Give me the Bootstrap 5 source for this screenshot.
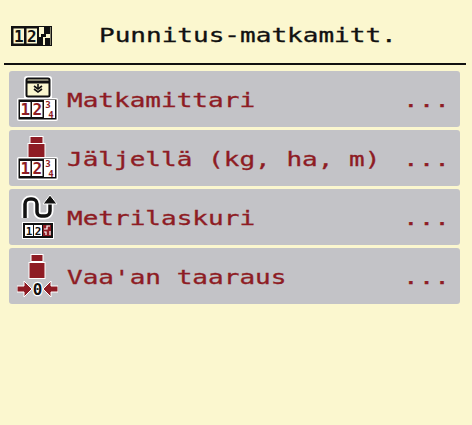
<!DOCTYPE html>
<html lang="en">
  <head>
    <meta charset="UTF-8" />
    <meta name="viewport" content="width=device-width, initial-scale=1.0" />
    <title>Punnitus-matkamitt.</title>
    <link
      href="https://cdn.jsdelivr.net/npm/bootstrap@5.3.0/dist/css/bootstrap.min.css"
      rel="stylesheet"
    />
    <style>
      body {
        background: #fbf7cf;
        font-family: "DejaVu Sans Mono", monospace;
      }
      .screen-head {
        height: 65px;
        margin: 0 6px 0 4px;
        padding: 26px 0 0 7px;
        border-bottom: 2px solid #111;
      }
      .wide-text {
        display: inline-block;
        font-size: 19px;
        line-height: 24px;
        transform: scaleX(1.37);
        transform-origin: left center;
        white-space: nowrap;
        -webkit-text-stroke: 0.3px currentColor;
      }
      .screen-title {
        margin: -3px 0 0 47px;
        font-size: 19px;
        line-height: 24px;
        color: #111;
      }
      .menu-stack {
        margin: 6px 12px 0 9px;
        gap: 3px;
      }
      .menu-row {
        height: 56px;
        padding: 0 10px 0 8px;
        background: #c3c3c7;
        border-radius: 3px;
        color: #8e1c24;
      }
      .menu-label {
        margin-left: 9px;
        padding-top: 4px;
      }
      .menu-dots {
        width: 47px;
        padding-top: 4px;
        flex: none;
      }
      .menu-icon {
        width: 41px;
        height: 46px;
        flex: none;
      }
      .icon-num {
        font-family: "DejaVu Sans Mono", monospace;
        font-weight: 700;
        font-size: 16px;
      }
      .icon-tiny {
        font-family: "DejaVu Sans Mono", monospace;
        font-weight: 700;
        font-size: 9px;
      }
      .icon-small {
        font-family: "DejaVu Sans Mono", monospace;
        font-weight: 700;
        font-size: 11px;
      }
    </style>
  </head>

  <body>
    <div class="screen-head d-flex align-items-start">
      <svg width="41" height="20" viewBox="0 0 41 20">
        <rect width="41" height="20" fill="#111" />
        <rect x="2.5" y="2.5" width="10.5" height="15" fill="#fbf7cf" />
        <rect x="15.5" y="2.5" width="10.5" height="15" fill="#fbf7cf" />
        <rect x="28" y="1" width="11.5" height="18" fill="#fbf7cf" />
        <text class="icon-num" x="7.7" y="16" text-anchor="middle" fill="#111">1</text>
        <text class="icon-num" x="20.7" y="16" text-anchor="middle" fill="#111">2</text>
        <path d="M33 1h6v7h-4v3h-5V8h3zM28 11h4v8h-4zM34 12h5v7h-5z" fill="#111" />
      </svg>
      <h1 class="screen-title fw-normal"><span class="wide-text">Punnitus-matkamitt.</span></h1>
    </div>

    <div class="menu-stack d-flex flex-column">
      <div class="menu-row d-flex align-items-center">
        <svg class="menu-icon" viewBox="0 0 41 46">
          <rect x="7" y="0" width="28" height="24" rx="3" fill="#fff" />
          <rect x="9.5" y="2.5" width="23" height="18" rx="1.5" fill="#fbf7cf" stroke="#111" stroke-width="2" />
          <path d="M10 6h22" stroke="#111" stroke-width="3" />
          <path d="M17 10l4 3 4-3M17 13l4 3 4-3" fill="none" stroke="#111" stroke-width="1.6" />
          <path d="M21 8v4" stroke="#111" stroke-width="1.6" />
          <rect x="0" y="22" width="41" height="23" rx="2" fill="#fff" />
          <rect x="1.5" y="23.5" width="38" height="20" fill="#111" />
          <rect x="3" y="26" width="10.5" height="15" fill="#fff" />
          <rect x="15" y="26" width="10.5" height="15" fill="#fff" />
          <rect x="27" y="24" width="11" height="18" fill="#fff" />
          <text class="icon-num" x="8.2" y="39" text-anchor="middle" fill="#8e1c24">1</text>
          <text class="icon-num" x="20.2" y="39" text-anchor="middle" fill="#8e1c24">2</text>
          <text class="icon-tiny" x="31" y="31.5" text-anchor="middle" fill="#8e1c24">3</text>
          <text class="icon-tiny" x="34" y="41.5" text-anchor="middle" fill="#8e1c24">4</text>
        </svg>
        <span class="menu-label flex-grow-1"><span class="wide-text">Matkamittari</span></span>
        <span class="menu-dots"><span class="wide-text">...</span></span>
      </div>

      <div class="menu-row d-flex align-items-center">
        <svg class="menu-icon" viewBox="0 0 41 46">
          <rect x="13" y="1.5" width="13" height="7" fill="#8e1c24" stroke="#fff" />
          <rect x="11" y="8.5" width="17" height="14" fill="#8e1c24" stroke="#fff" />
          <rect x="0" y="22" width="41" height="23" rx="2" fill="#fff" />
          <rect x="1.5" y="23.5" width="38" height="20" fill="#111" />
          <rect x="3" y="26" width="10.5" height="15" fill="#fff" />
          <rect x="15" y="26" width="10.5" height="15" fill="#fff" />
          <rect x="27" y="24" width="11" height="18" fill="#fff" />
          <text class="icon-num" x="8.2" y="39" text-anchor="middle" fill="#8e1c24">1</text>
          <text class="icon-num" x="20.2" y="39" text-anchor="middle" fill="#8e1c24">2</text>
          <text class="icon-tiny" x="31" y="31.5" text-anchor="middle" fill="#8e1c24">3</text>
          <text class="icon-tiny" x="34" y="41.5" text-anchor="middle" fill="#8e1c24">4</text>
        </svg>
        <span class="menu-label flex-grow-1"><span class="wide-text">Jäljellä (kg, ha, m)</span></span>
        <span class="menu-dots"><span class="wide-text">...</span></span>
      </div>

      <div class="menu-row d-flex align-items-center">
        <svg class="menu-icon" viewBox="0 0 41 46">
          <path d="M8 24V10a5 5 0 0 1 5-5h2a5 5 0 0 1 5 5v8a4 4 0 0 0 4 4h4a5 5 0 0 0 5-5V8" fill="none" stroke="#fff" stroke-width="7" />
          <path d="M8 24V10a5 5 0 0 1 5-5h2a5 5 0 0 1 5 5v8a4 4 0 0 0 4 4h4a5 5 0 0 0 5-5V8" fill="none" stroke="#111" stroke-width="3.5" />
          <path d="M33 1l7 9h-14z" fill="#111" stroke="#fff" stroke-width="1" />
          <rect x="5" y="28" width="32" height="17" fill="#fff" />
          <rect x="6" y="29" width="30" height="15" fill="#111" />
          <rect x="8" y="31" width="8" height="11" fill="#fff" />
          <rect x="17" y="31" width="8" height="11" fill="#fff" />
          <rect x="26" y="31" width="8" height="11" fill="#8e1c24" />
          <text class="icon-small" x="12" y="41" text-anchor="middle" fill="#111">1</text>
          <text class="icon-small" x="21" y="41" text-anchor="middle" fill="#111">2</text>
          <path d="M27 35h3v-3h3M27 38h2v3M33 37v4" fill="none" stroke="#fff" stroke-width="1.2" />
        </svg>
        <span class="menu-label flex-grow-1"><span class="wide-text">Metrilaskuri</span></span>
        <span class="menu-dots"><span class="wide-text">...</span></span>
      </div>

      <div class="menu-row d-flex align-items-center">
        <svg class="menu-icon" viewBox="0 0 41 46">
          <rect x="14" y="1.5" width="12" height="7" fill="#8e1c24" stroke="#fff" />
          <rect x="12" y="9.5" width="16" height="16" fill="#8e1c24" stroke="#fff" />
          <path d="M0 33h7v-5l8 8-8 8v-5H0z" fill="#8e1c24" stroke="#fff" />
          <path d="M41 33h-7v-5l-8 8 8 8v-5h7z" fill="#8e1c24" stroke="#fff" />
          <text class="icon-num" x="20.5" y="41.5" text-anchor="middle" fill="#111" stroke="#fff" stroke-width="2.5" paint-order="stroke">0</text>
        </svg>
        <span class="menu-label flex-grow-1"><span class="wide-text">Vaa'an taaraus</span></span>
        <span class="menu-dots"><span class="wide-text">...</span></span>
      </div>
    </div>

    <script src="https://cdn.jsdelivr.net/npm/bootstrap@5.3.0/dist/js/bootstrap.bundle.min.js"></script>
  </body>
</html>
